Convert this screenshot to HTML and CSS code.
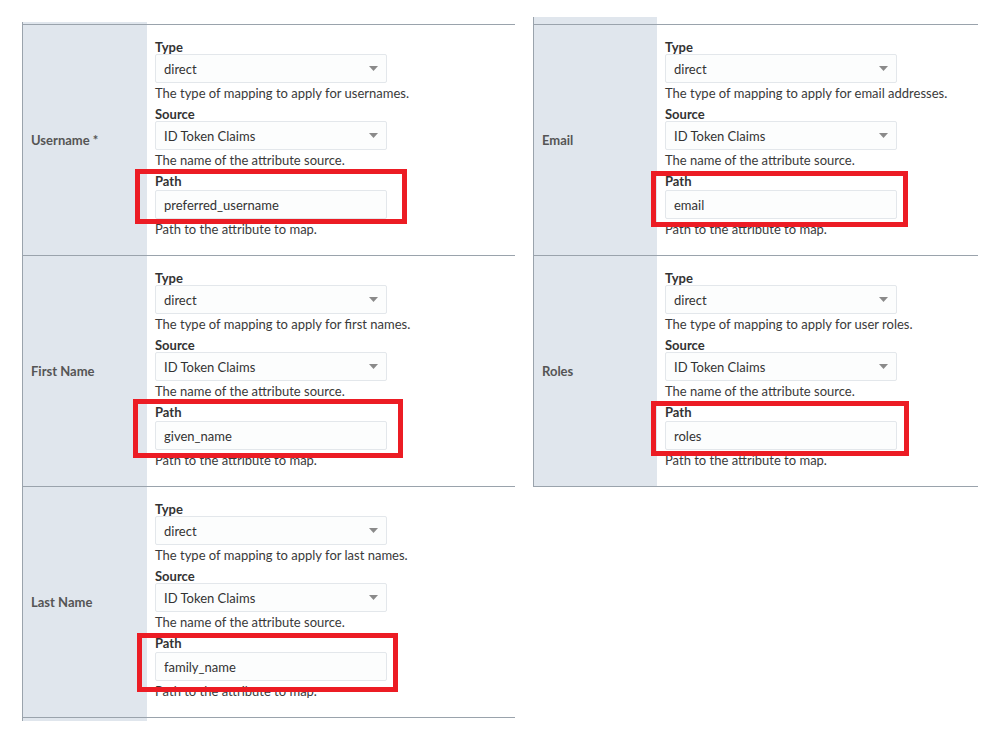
FILE: index.html
```html
<!DOCTYPE html>
<html lang="en">
<head>
    <meta charset="UTF-8">
    <meta name="viewport" content="width=device-width, initial-scale=1.0">
    <title>Attribute Mapping</title>
    <link rel="stylesheet" href="styles.css">
</head>
<body>
    <div class="page">
        <!-- columna izquierda -->
        <div class="mapping mapping-left">
            <div class="stub stub-top-left"><div class="stub-label"></div></div>

            <div class="row">
                <div class="row-label">Username *</div>
                <div class="row-body">
                    <div class="field-label">Type</div>
                    <div class="select"><span>direct</span><svg class="caret" width="9" height="5" viewBox="0 0 9 5"><path d="M0 0H9L4.5 5Z"/></svg></div>
                    <div class="field-help">The type of mapping to apply for usernames.</div>
                    <div class="field-label">Source</div>
                    <div class="select"><span>ID Token Claims</span><svg class="caret" width="9" height="5" viewBox="0 0 9 5"><path d="M0 0H9L4.5 5Z"/></svg></div>
                    <div class="field-help">The name of the attribute source.</div>
                    <div class="field-label">Path</div>
                    <input class="text-input" type="text" value="preferred_username">
                    <div class="field-help">Path to the attribute to map.</div>
                </div>
            </div>

            <div class="row">
                <div class="row-label">First Name</div>
                <div class="row-body">
                    <div class="field-label">Type</div>
                    <div class="select"><span>direct</span><svg class="caret" width="9" height="5" viewBox="0 0 9 5"><path d="M0 0H9L4.5 5Z"/></svg></div>
                    <div class="field-help">The type of mapping to apply for first names.</div>
                    <div class="field-label">Source</div>
                    <div class="select"><span>ID Token Claims</span><svg class="caret" width="9" height="5" viewBox="0 0 9 5"><path d="M0 0H9L4.5 5Z"/></svg></div>
                    <div class="field-help">The name of the attribute source.</div>
                    <div class="field-label">Path</div>
                    <input class="text-input" type="text" value="given_name">
                    <div class="field-help">Path to the attribute to map.</div>
                </div>
            </div>

            <div class="row row-last">
                <div class="row-label">Last Name</div>
                <div class="row-body">
                    <div class="field-label">Type</div>
                    <div class="select"><span>direct</span><svg class="caret" width="9" height="5" viewBox="0 0 9 5"><path d="M0 0H9L4.5 5Z"/></svg></div>
                    <div class="field-help">The type of mapping to apply for last names.</div>
                    <div class="field-label">Source</div>
                    <div class="select"><span>ID Token Claims</span><svg class="caret" width="9" height="5" viewBox="0 0 9 5"><path d="M0 0H9L4.5 5Z"/></svg></div>
                    <div class="field-help">The name of the attribute source.</div>
                    <div class="field-label">Path</div>
                    <input class="text-input" type="text" value="family_name">
                    <div class="field-help">Path to the attribute to map.</div>
                </div>
            </div>

            <div class="stub stub-bottom-left"><div class="stub-label"></div></div>
        </div>

        <!-- columna derecha -->
        <div class="mapping mapping-right">
            <div class="stub stub-top-right"><div class="stub-label"></div></div>

            <div class="row">
                <div class="row-label">Email</div>
                <div class="row-body">
                    <div class="field-label">Type</div>
                    <div class="select"><span>direct</span><svg class="caret" width="9" height="5" viewBox="0 0 9 5"><path d="M0 0H9L4.5 5Z"/></svg></div>
                    <div class="field-help">The type of mapping to apply for email addresses.</div>
                    <div class="field-label">Source</div>
                    <div class="select"><span>ID Token Claims</span><svg class="caret" width="9" height="5" viewBox="0 0 9 5"><path d="M0 0H9L4.5 5Z"/></svg></div>
                    <div class="field-help">The name of the attribute source.</div>
                    <div class="field-label">Path</div>
                    <input class="text-input" type="text" value="email">
                    <div class="field-help">Path to the attribute to map.</div>
                </div>
            </div>

            <div class="row row-last">
                <div class="row-label">Roles</div>
                <div class="row-body">
                    <div class="field-label">Type</div>
                    <div class="select"><span>direct</span><svg class="caret" width="9" height="5" viewBox="0 0 9 5"><path d="M0 0H9L4.5 5Z"/></svg></div>
                    <div class="field-help">The type of mapping to apply for user roles.</div>
                    <div class="field-label">Source</div>
                    <div class="select"><span>ID Token Claims</span><svg class="caret" width="9" height="5" viewBox="0 0 9 5"><path d="M0 0H9L4.5 5Z"/></svg></div>
                    <div class="field-help">The name of the attribute source.</div>
                    <div class="field-label">Path</div>
                    <input class="text-input" type="text" value="roles">
                    <div class="field-help">Path to the attribute to map.</div>
                </div>
            </div>
        </div>

        <!-- marcas rojas sobre los campos Path -->
        <div class="highlight hl-username"></div>
        <div class="highlight hl-firstname"></div>
        <div class="highlight hl-lastname"></div>
        <div class="highlight hl-email"></div>
        <div class="highlight hl-roles"></div>
    </div>
</body>
</html>
```

FILE: styles.css
```css
body {
    margin: 0;
    padding: 0;
    background: #fff;
    font-family: Lato, "Open Sans", sans-serif;
    font-size: 13px;
    color: #333;
}
.page {
    position: relative;
    display: flex;
    align-items: flex-start;
    padding-left: 22px;
    height: 737px;
    box-sizing: border-box;
}
.mapping {
    border-left: 1px solid #9aa3ac;
}
.mapping-left {
    width: 492px;
    margin-top: 22px;
}
.mapping-right {
    width: 444px;
    margin-top: 17px;
    margin-left: 18px;
}
.mapping-left .row,
.mapping-left .stub {
    grid-template-columns: 124px 1fr;
}
.mapping-right .row,
.mapping-right .stub {
    grid-template-columns: 123px 1fr;
}
.stub {
    display: grid;
}
.stub-label {
    background: #e0e6ed;
}
.stub-top-left {
    height: 2px;
}
.stub-top-right {
    height: 7px;
}
.stub-bottom-left {
    height: 3px;
}
.row {
    display: grid;
    border-top: 1px solid #9aa3ac;
}
.row-last {
    border-bottom: 1px solid #9aa3ac;
}
.row-label {
    background: #e0e6ed;
    display: flex;
    align-items: center;
    padding-left: 8px;
    font-weight: bold;
    color: #555;
}
.row-body {
    padding: 12px 8px 15px 8px;
}
.field-label {
    font-weight: bold;
    line-height: 14px;
    padding-top: 3px;
    color: #333;
}
.field-help {
    line-height: 21px;
    color: #3a3a3a;
}
.select,
.text-input {
    width: 232px;
    height: 29px;
    box-sizing: border-box;
    border: 1px solid #e3e7eb;
    background: #fcfdfd;
    border-radius: 2px;
}
.select {
    display: flex;
    align-items: center;
    justify-content: space-between;
    padding: 0 8px 0 8px;
}
.caret {
    fill: #8a8a8a;
}
.text-input {
    display: block;
    margin-top: 2px;
    padding: 0 8px;
    font-family: inherit;
    font-size: 13px;
    color: #333;
    outline: none;
}
.highlight {
    position: absolute;
    border: 5px solid #ec1c24;
    box-sizing: border-box;
}
.hl-username {
    left: 135px;
    top: 169px;
    width: 272px;
    height: 55px;
}
.hl-firstname {
    left: 133px;
    top: 399px;
    width: 270px;
    height: 59px;
}
.hl-lastname {
    left: 137px;
    top: 633px;
    width: 261px;
    height: 59px;
}
.hl-email {
    left: 651px;
    top: 171px;
    width: 257px;
    height: 56px;
}
.hl-roles {
    left: 651px;
    top: 401px;
    width: 258px;
    height: 55px;
}
```
